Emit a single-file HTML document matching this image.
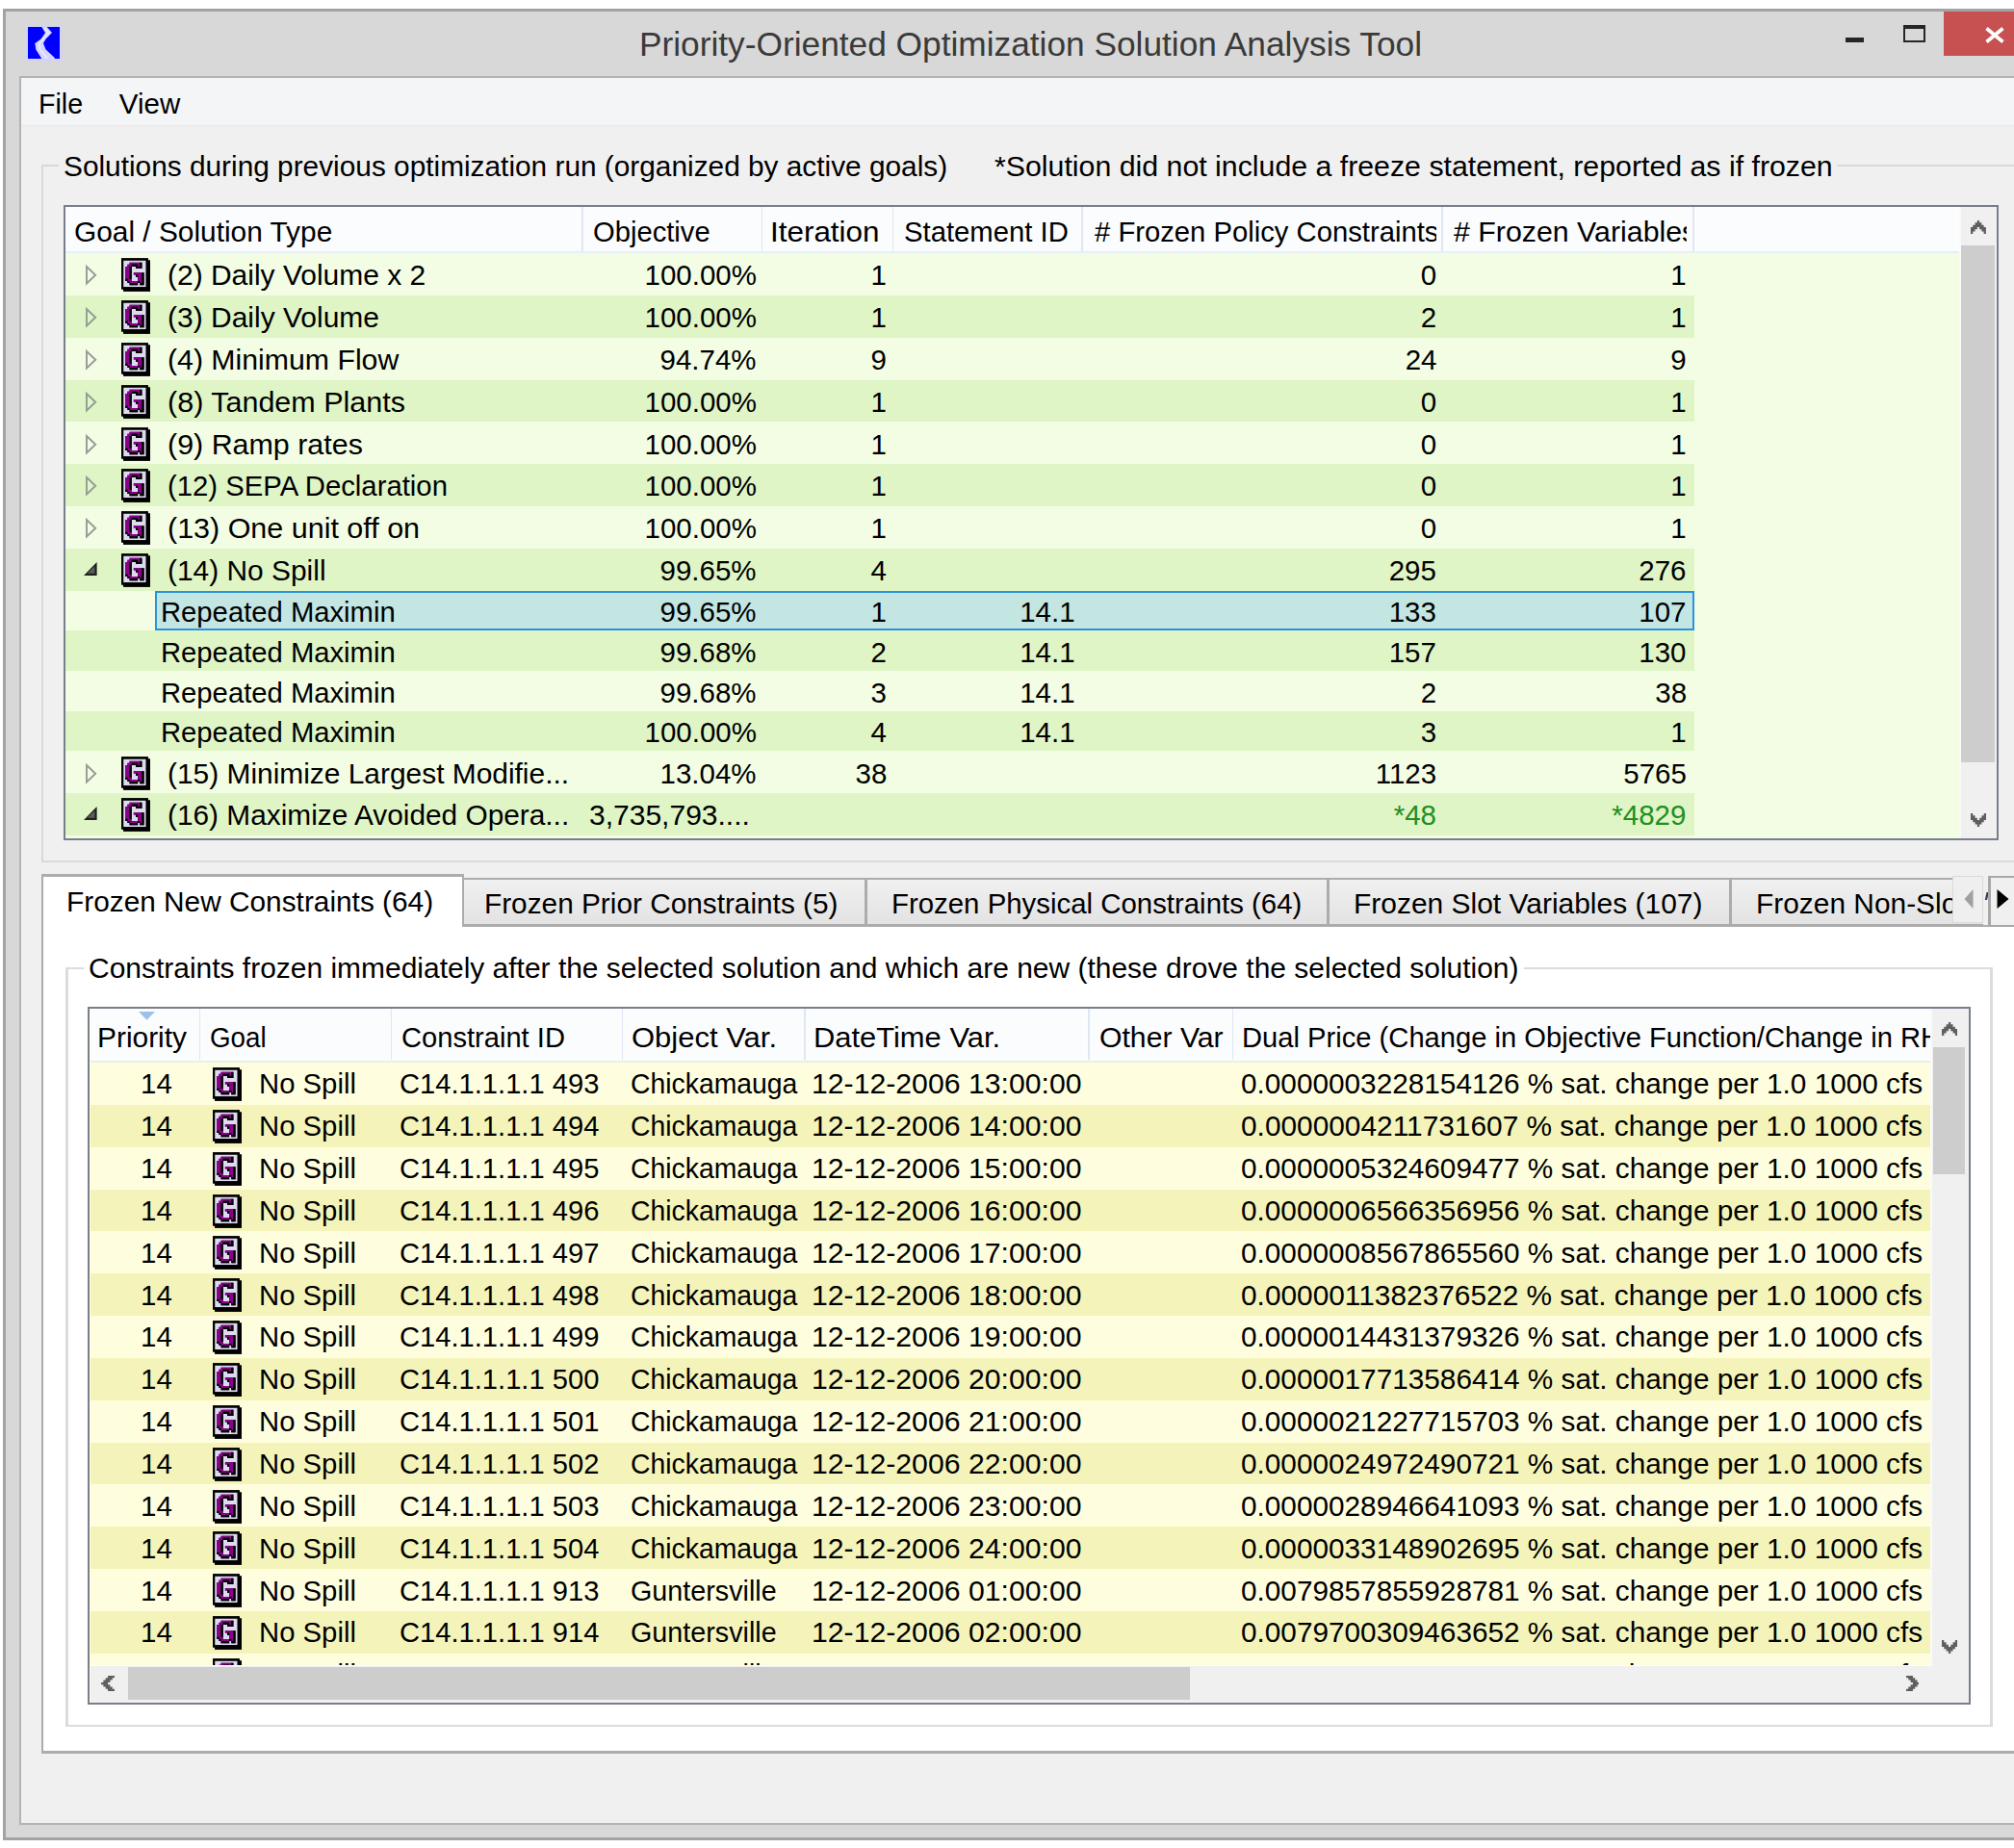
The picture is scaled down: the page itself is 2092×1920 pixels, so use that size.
<!DOCTYPE html>
<html><head><meta charset="utf-8"><title>Priority-Oriented Optimization Solution Analysis Tool</title>
<style>
html,body{margin:0;padding:0;}
body{width:2092px;height:1920px;position:relative;overflow:hidden;background:#ffffff;font-family:'Liberation Sans', sans-serif;}
.t{position:absolute;white-space:pre;font-family:'Liberation Sans', sans-serif;}
</style></head><body>
<svg width="0" height="0" style="position:absolute"><defs><symbol id="gi" viewBox="0 0 14 16"><rect x="0" y="0" width="13" height="15" fill="#000"/><rect x="1" y="1" width="13" height="15" fill="#000"/><path fill="#dedaf0" d="M1 1h11v1h-11zM1 2h3v1h-3zM10 2h2v1h-2zM1 3h2v1h-2zM10 3h2v1h-2zM1 4h1v1h-1zM5 4h2v1h-2zM10 4h2v1h-2zM1 5h1v1h-1zM5 5h7v1h-7zM1 6h1v1h-1zM5 6h7v1h-7zM1 7h1v1h-1zM5 7h1v1h-1zM11 7h1v1h-1zM1 8h1v1h-1zM5 8h2v1h-2zM11 8h1v1h-1zM1 9h1v1h-1zM5 9h3v1h-3zM11 9h1v1h-1zM1 10h1v1h-1zM5 10h3v1h-3zM11 10h1v1h-1zM1 11h2v1h-2zM11 11h1v1h-1zM1 12h3v1h-3zM8 12h1v1h-1zM11 12h1v1h-1zM1 13h11v1h-11z"/><path fill="#8b008b" d="M4 2h5v1h-5zM3 3h2v1h-2zM8 3h1v1h-1zM2 4h2v1h-2zM2 5h2v1h-2zM2 6h2v1h-2zM2 7h2v1h-2zM6 7h4v1h-4zM2 8h2v1h-2zM8 8h2v1h-2zM2 9h2v1h-2zM8 9h2v1h-2zM3 10h2v1h-2zM8 10h2v1h-2zM4 11h4v1h-4zM9 11h1v1h-1z"/><path fill="#000" d="M0 0h13v1h-13zM0 1h1v1h-1zM12 1h2v1h-2zM0 2h1v1h-1zM9 2h1v1h-1zM12 2h2v1h-2zM0 3h1v1h-1zM5 3h3v1h-3zM9 3h1v1h-1zM12 3h2v1h-2zM0 4h1v1h-1zM4 4h1v1h-1zM7 4h3v1h-3zM12 4h2v1h-2zM0 5h1v1h-1zM4 5h1v1h-1zM12 5h2v1h-2zM0 6h1v1h-1zM4 6h1v1h-1zM12 6h2v1h-2zM0 7h1v1h-1zM4 7h1v1h-1zM10 7h1v1h-1zM12 7h2v1h-2zM0 8h1v1h-1zM4 8h1v1h-1zM7 8h1v1h-1zM10 8h1v1h-1zM12 8h2v1h-2zM0 9h1v1h-1zM4 9h1v1h-1zM10 9h1v1h-1zM12 9h2v1h-2zM0 10h1v1h-1zM2 10h1v1h-1zM10 10h1v1h-1zM12 10h2v1h-2zM0 11h1v1h-1zM3 11h1v1h-1zM8 11h1v1h-1zM10 11h1v1h-1zM12 11h2v1h-2zM0 12h1v1h-1zM4 12h4v1h-4zM9 12h2v1h-2zM12 12h2v1h-2zM0 13h1v1h-1zM12 13h2v1h-2zM0 14h14v1h-14zM1 15h13v1h-13z"/></symbol></defs></svg>
<div style="position:absolute;left:3.00px;top:9.00px;width:2089.00px;height:1903.00px;background:#a3a3a3;"></div>
<div style="position:absolute;left:6.00px;top:12.00px;width:2086.00px;height:1897.00px;background:#d8d8d8;"></div>
<div style="position:absolute;left:27.00px;top:26.00px;width:36.50px;height:37.00px;background:#d2d2fa;"></div>
<div style="position:absolute;left:29.00px;top:28.00px;width:32.50px;height:33.00px;background:#0000ff;"></div>
<svg style="position:absolute;left:29px;top:28px" width="32.5" height="33" viewBox="0 0 32.5 33"><path d="M14.3,0 L19.7,0 L25,6 L18.6,12.6 L16,17 L18.6,23.4 L27.8,32 L27.8,33 L14.3,33 L8.3,23.4 L7.3,17 L13.7,12.6 L18,6 Z" fill="#d4d4ff"/><path d="M17,1 L21.5,6 L15.5,12.6 L11.5,17 L12.5,23.4 L20,33" fill="none" stroke="#e6e6ff" stroke-width="2.2"/></svg>
<div class="t" style="left:663.80px;top:27.90px;font-size:35.2px;line-height:35.2px;color:#3a3a3a;transform:scaleX(1.0025);transform-origin:left top;">Priority-Oriented Optimization Solution Analysis Tool</div>
<div style="position:absolute;left:1917.00px;top:39.00px;width:19.00px;height:5.00px;background:#262626;"></div>
<div style="position:absolute;box-sizing:border-box;left:1977.00px;top:25.60px;width:23.00px;height:18.40px;border:2px solid #262626;background:transparent;"></div>
<div style="position:absolute;left:1977.00px;top:25.60px;width:23.00px;height:4.00px;background:#262626;"></div>
<div style="position:absolute;left:2019.00px;top:12.00px;width:73.00px;height:46.00px;background:#c75050;"></div>
<svg style="position:absolute;left:2062px;top:27.5px" width="20" height="17" viewBox="0 0 20 17"><path d="M1.5,1.5 L18.5,15.5 M18.5,1.5 L1.5,15.5" stroke="#fff" stroke-width="3.6"/></svg>
<div style="position:absolute;left:20.00px;top:79.00px;width:2072.00px;height:1816.50px;background:#b3b3b3;"></div>
<div style="position:absolute;left:22.00px;top:81.00px;width:2070.00px;height:1812.50px;background:#f0f0f0;"></div>
<div style="position:absolute;left:22.00px;top:81.00px;width:2070.00px;height:49.00px;background:#f4f5f7;"></div>
<div style="position:absolute;left:22.00px;top:130.00px;width:2070.00px;height:1.00px;background:#e8e9eb;"></div>
<div class="t" style="left:40.36px;top:92.73px;font-size:29.5px;line-height:29.5px;color:#000;transform:scaleX(0.9711);transform-origin:left top;">File</div>
<div class="t" style="left:123.80px;top:92.73px;font-size:29.5px;line-height:29.5px;color:#000;">View</div>
<div style="position:absolute;left:43.00px;top:171.00px;width:2.00px;height:725.00px;background:#d9d9d9;"></div>
<div style="position:absolute;left:43.00px;top:171.00px;width:18.00px;height:2.00px;background:#d9d9d9;"></div>
<div style="position:absolute;left:1907.50px;top:171.00px;width:184.50px;height:2.00px;background:#d9d9d9;"></div>
<div style="position:absolute;left:43.00px;top:894.00px;width:2049.00px;height:2.00px;background:#d9d9d9;"></div>
<div class="t" style="left:65.69px;top:157.63px;font-size:29.5px;line-height:29.5px;color:#000;transform:scaleX(1.0107);transform-origin:left top;">Solutions during previous optimization run (organized by active goals)</div>
<div class="t" style="left:1032.60px;top:157.63px;font-size:29.5px;line-height:29.5px;color:#000;transform:scaleX(1.0270);transform-origin:left top;">*Solution did not include a freeze statement, reported as if frozen</div>
<div style="position:absolute;box-sizing:border-box;left:66.00px;top:213.00px;width:2010.40px;height:659.60px;border:2px solid #787e8b;background:#f3fde4;"></div>
<div style="position:absolute;left:68.00px;top:215.00px;width:1969.00px;height:46.00px;background:#fbfcfd;"></div>
<div style="position:absolute;left:68.00px;top:261.00px;width:1969.00px;height:2.00px;background:#e6eef8;"></div>
<div style="position:absolute;left:604.40px;top:215.00px;width:1.20px;height:46.00px;background:#dfe7f2;"></div>
<div style="position:absolute;left:791.20px;top:215.00px;width:1.20px;height:46.00px;background:#dfe7f2;"></div>
<div style="position:absolute;left:926.90px;top:215.00px;width:1.20px;height:46.00px;background:#dfe7f2;"></div>
<div style="position:absolute;left:1123.40px;top:215.00px;width:1.20px;height:46.00px;background:#dfe7f2;"></div>
<div style="position:absolute;left:1497.40px;top:215.00px;width:1.20px;height:46.00px;background:#dfe7f2;"></div>
<div style="position:absolute;left:1758.40px;top:215.00px;width:1.20px;height:46.00px;background:#dfe7f2;"></div>
<div class="t" style="left:76.59px;top:226.03px;font-size:29.5px;line-height:29.5px;color:#000;transform:scaleX(1.0117);transform-origin:left top;">Goal / Solution Type</div>
<div class="t" style="left:615.91px;top:226.03px;font-size:29.5px;line-height:29.5px;color:#000;transform:scaleX(0.9893);transform-origin:left top;">Objective</div>
<div class="t" style="left:800.47px;top:226.03px;font-size:29.5px;line-height:29.5px;color:#000;transform:scaleX(1.0650);transform-origin:left top;">Iteration</div>
<div class="t" style="left:939.11px;top:226.03px;font-size:29.5px;line-height:29.5px;color:#000;transform:scaleX(0.9924);transform-origin:left top;">Statement ID</div>
<div style="position:absolute;left:1124.60px;top:215.00px;width:367.40px;height:46.00px;overflow:hidden">
<div class="t" style="left:12.20px;top:11.03px;font-size:29.5px;line-height:29.5px;color:#000;transform:scaleX(0.9910);transform-origin:left top;"># Frozen Policy Constraints</div>
</div>
<div style="position:absolute;left:1498.60px;top:215.00px;width:253.40px;height:46.00px;overflow:hidden">
<div class="t" style="left:11.40px;top:11.03px;font-size:29.5px;line-height:29.5px;color:#000;transform:scaleX(1.0280);transform-origin:left top;"># Frozen Variables</div>
</div>
<div style="position:absolute;left:68.00px;top:263.00px;width:1969.00px;height:607.60px;overflow:hidden">
<svg style="position:absolute;left:20.00px;top:11.20px" width="16" height="24" viewBox="0 0 16 24"><polygon points="2,3 2,20.5 11.2,11.75" fill="none" stroke="#959b95" stroke-width="1.9"/></svg>
<svg style="position:absolute;left:58.00px;top:5.20px" width="30.0" height="35.0"><use href="#gi"/></svg>
<div class="t" style="left:105.78px;top:8.23px;font-size:29.5px;line-height:29.5px;color:#000;transform:scaleX(1.0163);transform-origin:left top;">(2) Daily Volume x 2</div>
<div class="t" style="left:601.50px;top:8.23px;font-size:29.5px;line-height:29.5px;color:#000;">100.00%</div>
<div class="t" style="left:836.50px;top:8.23px;font-size:29.5px;line-height:29.5px;color:#000;">1</div>
<div class="t" style="left:1407.70px;top:8.23px;font-size:29.5px;line-height:29.5px;color:#000;">0</div>
<div class="t" style="left:1667.30px;top:8.23px;font-size:29.5px;line-height:29.5px;color:#000;">1</div>
<div style="position:absolute;left:0.00px;top:43.85px;width:1692.00px;height:43.85px;background:#dff5c6;"></div>
<svg style="position:absolute;left:20.00px;top:55.05px" width="16" height="24" viewBox="0 0 16 24"><polygon points="2,3 2,20.5 11.2,11.75" fill="none" stroke="#959b95" stroke-width="1.9"/></svg>
<svg style="position:absolute;left:58.00px;top:49.05px" width="30.0" height="35.0"><use href="#gi"/></svg>
<div class="t" style="left:105.78px;top:52.08px;font-size:29.5px;line-height:29.5px;color:#000;transform:scaleX(1.0167);transform-origin:left top;">(3) Daily Volume</div>
<div class="t" style="left:601.50px;top:52.08px;font-size:29.5px;line-height:29.5px;color:#000;">100.00%</div>
<div class="t" style="left:836.50px;top:52.08px;font-size:29.5px;line-height:29.5px;color:#000;">1</div>
<div class="t" style="left:1407.70px;top:52.08px;font-size:29.5px;line-height:29.5px;color:#000;">2</div>
<div class="t" style="left:1667.30px;top:52.08px;font-size:29.5px;line-height:29.5px;color:#000;">1</div>
<svg style="position:absolute;left:20.00px;top:98.90px" width="16" height="24" viewBox="0 0 16 24"><polygon points="2,3 2,20.5 11.2,11.75" fill="none" stroke="#959b95" stroke-width="1.9"/></svg>
<svg style="position:absolute;left:58.00px;top:92.90px" width="30.0" height="35.0"><use href="#gi"/></svg>
<div class="t" style="left:105.77px;top:95.93px;font-size:29.5px;line-height:29.5px;color:#000;transform:scaleX(1.0252);transform-origin:left top;">(4) Minimum Flow</div>
<div class="t" style="left:617.50px;top:95.93px;font-size:29.5px;line-height:29.5px;color:#000;">94.74%</div>
<div class="t" style="left:836.50px;top:95.93px;font-size:29.5px;line-height:29.5px;color:#000;">9</div>
<div class="t" style="left:1391.70px;top:95.93px;font-size:29.5px;line-height:29.5px;color:#000;">24</div>
<div class="t" style="left:1667.30px;top:95.93px;font-size:29.5px;line-height:29.5px;color:#000;">9</div>
<div style="position:absolute;left:0.00px;top:131.55px;width:1692.00px;height:43.85px;background:#dff5c6;"></div>
<svg style="position:absolute;left:20.00px;top:142.75px" width="16" height="24" viewBox="0 0 16 24"><polygon points="2,3 2,20.5 11.2,11.75" fill="none" stroke="#959b95" stroke-width="1.9"/></svg>
<svg style="position:absolute;left:58.00px;top:136.75px" width="30.0" height="35.0"><use href="#gi"/></svg>
<div class="t" style="left:105.77px;top:139.78px;font-size:29.5px;line-height:29.5px;color:#000;transform:scaleX(1.0342);transform-origin:left top;">(8) Tandem Plants</div>
<div class="t" style="left:601.50px;top:139.78px;font-size:29.5px;line-height:29.5px;color:#000;">100.00%</div>
<div class="t" style="left:836.50px;top:139.78px;font-size:29.5px;line-height:29.5px;color:#000;">1</div>
<div class="t" style="left:1407.70px;top:139.78px;font-size:29.5px;line-height:29.5px;color:#000;">0</div>
<div class="t" style="left:1667.30px;top:139.78px;font-size:29.5px;line-height:29.5px;color:#000;">1</div>
<svg style="position:absolute;left:20.00px;top:186.60px" width="16" height="24" viewBox="0 0 16 24"><polygon points="2,3 2,20.5 11.2,11.75" fill="none" stroke="#959b95" stroke-width="1.9"/></svg>
<svg style="position:absolute;left:58.00px;top:180.60px" width="30.0" height="35.0"><use href="#gi"/></svg>
<div class="t" style="left:105.77px;top:183.63px;font-size:29.5px;line-height:29.5px;color:#000;transform:scaleX(1.0313);transform-origin:left top;">(9) Ramp rates</div>
<div class="t" style="left:601.50px;top:183.63px;font-size:29.5px;line-height:29.5px;color:#000;">100.00%</div>
<div class="t" style="left:836.50px;top:183.63px;font-size:29.5px;line-height:29.5px;color:#000;">1</div>
<div class="t" style="left:1407.70px;top:183.63px;font-size:29.5px;line-height:29.5px;color:#000;">0</div>
<div class="t" style="left:1667.30px;top:183.63px;font-size:29.5px;line-height:29.5px;color:#000;">1</div>
<div style="position:absolute;left:0.00px;top:219.25px;width:1692.00px;height:43.85px;background:#dff5c6;"></div>
<svg style="position:absolute;left:20.00px;top:230.45px" width="16" height="24" viewBox="0 0 16 24"><polygon points="2,3 2,20.5 11.2,11.75" fill="none" stroke="#959b95" stroke-width="1.9"/></svg>
<svg style="position:absolute;left:58.00px;top:224.45px" width="30.0" height="35.0"><use href="#gi"/></svg>
<div class="t" style="left:105.81px;top:227.48px;font-size:29.5px;line-height:29.5px;color:#000;transform:scaleX(0.9931);transform-origin:left top;">(12) SEPA Declaration</div>
<div class="t" style="left:601.50px;top:227.48px;font-size:29.5px;line-height:29.5px;color:#000;">100.00%</div>
<div class="t" style="left:836.50px;top:227.48px;font-size:29.5px;line-height:29.5px;color:#000;">1</div>
<div class="t" style="left:1407.70px;top:227.48px;font-size:29.5px;line-height:29.5px;color:#000;">0</div>
<div class="t" style="left:1667.30px;top:227.48px;font-size:29.5px;line-height:29.5px;color:#000;">1</div>
<svg style="position:absolute;left:20.00px;top:274.30px" width="16" height="24" viewBox="0 0 16 24"><polygon points="2,3 2,20.5 11.2,11.75" fill="none" stroke="#959b95" stroke-width="1.9"/></svg>
<svg style="position:absolute;left:58.00px;top:268.30px" width="30.0" height="35.0"><use href="#gi"/></svg>
<div class="t" style="left:105.77px;top:271.33px;font-size:29.5px;line-height:29.5px;color:#000;transform:scaleX(1.0331);transform-origin:left top;">(13) One unit off on</div>
<div class="t" style="left:601.50px;top:271.33px;font-size:29.5px;line-height:29.5px;color:#000;">100.00%</div>
<div class="t" style="left:836.50px;top:271.33px;font-size:29.5px;line-height:29.5px;color:#000;">1</div>
<div class="t" style="left:1407.70px;top:271.33px;font-size:29.5px;line-height:29.5px;color:#000;">0</div>
<div class="t" style="left:1667.30px;top:271.33px;font-size:29.5px;line-height:29.5px;color:#000;">1</div>
<div style="position:absolute;left:0.00px;top:306.95px;width:1692.00px;height:43.85px;background:#dff5c6;"></div>
<svg style="position:absolute;left:19.10px;top:320.95px" width="13.6" height="14" viewBox="0 0 13.6 14"><polygon points="0,14 13.6,14 13.6,0" fill="#1e211e"/><polygon points="3.6,11.8 11.4,11.8 11.4,4.2" fill="#5c5c5c"/></svg>
<svg style="position:absolute;left:58.00px;top:312.15px" width="30.0" height="35.0"><use href="#gi"/></svg>
<div class="t" style="left:105.79px;top:315.18px;font-size:29.5px;line-height:29.5px;color:#000;transform:scaleX(1.0137);transform-origin:left top;">(14) No Spill</div>
<div class="t" style="left:617.50px;top:315.18px;font-size:29.5px;line-height:29.5px;color:#000;">99.65%</div>
<div class="t" style="left:836.50px;top:315.18px;font-size:29.5px;line-height:29.5px;color:#000;">4</div>
<div class="t" style="left:1374.70px;top:315.18px;font-size:29.5px;line-height:29.5px;color:#000;">295</div>
<div class="t" style="left:1634.30px;top:315.18px;font-size:29.5px;line-height:29.5px;color:#000;">276</div>
<div style="position:absolute;box-sizing:border-box;left:92.90px;top:351.20px;width:1599.10px;height:41.05px;border:2.3px solid #2894dc;background:#c3e6e3;"></div>
<div class="t" style="left:98.82px;top:358.23px;font-size:29.5px;line-height:29.5px;color:#000;transform:scaleX(0.9909);transform-origin:left top;">Repeated Maximin</div>
<div class="t" style="left:617.50px;top:358.23px;font-size:29.5px;line-height:29.5px;color:#000;">99.65%</div>
<div class="t" style="left:836.50px;top:358.23px;font-size:29.5px;line-height:29.5px;color:#000;">1</div>
<div class="t" style="left:991.20px;top:358.23px;font-size:29.5px;line-height:29.5px;color:#000;">14.1</div>
<div class="t" style="left:1374.70px;top:358.23px;font-size:29.5px;line-height:29.5px;color:#000;">133</div>
<div class="t" style="left:1634.30px;top:358.23px;font-size:29.5px;line-height:29.5px;color:#000;">107</div>
<div style="position:absolute;left:0.00px;top:392.45px;width:1692.00px;height:41.65px;background:#dff5c6;"></div>
<div class="t" style="left:98.82px;top:399.88px;font-size:29.5px;line-height:29.5px;color:#000;transform:scaleX(0.9909);transform-origin:left top;">Repeated Maximin</div>
<div class="t" style="left:617.50px;top:399.88px;font-size:29.5px;line-height:29.5px;color:#000;">99.68%</div>
<div class="t" style="left:836.50px;top:399.88px;font-size:29.5px;line-height:29.5px;color:#000;">2</div>
<div class="t" style="left:991.20px;top:399.88px;font-size:29.5px;line-height:29.5px;color:#000;">14.1</div>
<div class="t" style="left:1374.70px;top:399.88px;font-size:29.5px;line-height:29.5px;color:#000;">157</div>
<div class="t" style="left:1634.30px;top:399.88px;font-size:29.5px;line-height:29.5px;color:#000;">130</div>
<div class="t" style="left:98.82px;top:441.53px;font-size:29.5px;line-height:29.5px;color:#000;transform:scaleX(0.9909);transform-origin:left top;">Repeated Maximin</div>
<div class="t" style="left:617.50px;top:441.53px;font-size:29.5px;line-height:29.5px;color:#000;">99.68%</div>
<div class="t" style="left:836.50px;top:441.53px;font-size:29.5px;line-height:29.5px;color:#000;">3</div>
<div class="t" style="left:991.20px;top:441.53px;font-size:29.5px;line-height:29.5px;color:#000;">14.1</div>
<div class="t" style="left:1407.70px;top:441.53px;font-size:29.5px;line-height:29.5px;color:#000;">2</div>
<div class="t" style="left:1651.30px;top:441.53px;font-size:29.5px;line-height:29.5px;color:#000;">38</div>
<div style="position:absolute;left:0.00px;top:475.75px;width:1692.00px;height:41.65px;background:#dff5c6;"></div>
<div class="t" style="left:98.82px;top:483.18px;font-size:29.5px;line-height:29.5px;color:#000;transform:scaleX(0.9909);transform-origin:left top;">Repeated Maximin</div>
<div class="t" style="left:601.50px;top:483.18px;font-size:29.5px;line-height:29.5px;color:#000;">100.00%</div>
<div class="t" style="left:836.50px;top:483.18px;font-size:29.5px;line-height:29.5px;color:#000;">4</div>
<div class="t" style="left:991.20px;top:483.18px;font-size:29.5px;line-height:29.5px;color:#000;">14.1</div>
<div class="t" style="left:1407.70px;top:483.18px;font-size:29.5px;line-height:29.5px;color:#000;">3</div>
<div class="t" style="left:1667.30px;top:483.18px;font-size:29.5px;line-height:29.5px;color:#000;">1</div>
<svg style="position:absolute;left:20.00px;top:528.60px" width="16" height="24" viewBox="0 0 16 24"><polygon points="2,3 2,20.5 11.2,11.75" fill="none" stroke="#959b95" stroke-width="1.9"/></svg>
<svg style="position:absolute;left:58.00px;top:522.60px" width="30.0" height="35.0"><use href="#gi"/></svg>
<div class="t" style="left:105.79px;top:525.63px;font-size:29.5px;line-height:29.5px;color:#000;transform:scaleX(1.0135);transform-origin:left top;">(15) Minimize Largest Modifie...</div>
<div class="t" style="left:617.50px;top:525.63px;font-size:29.5px;line-height:29.5px;color:#000;">13.04%</div>
<div class="t" style="left:820.50px;top:525.63px;font-size:29.5px;line-height:29.5px;color:#000;">38</div>
<div class="t" style="left:1360.70px;top:525.63px;font-size:29.5px;line-height:29.5px;color:#000;">1123</div>
<div class="t" style="left:1618.30px;top:525.63px;font-size:29.5px;line-height:29.5px;color:#000;">5765</div>
<div style="position:absolute;left:0.00px;top:561.25px;width:1692.00px;height:43.85px;background:#dff5c6;"></div>
<svg style="position:absolute;left:19.10px;top:575.25px" width="13.6" height="14" viewBox="0 0 13.6 14"><polygon points="0,14 13.6,14 13.6,0" fill="#1e211e"/><polygon points="3.6,11.8 11.4,11.8 11.4,4.2" fill="#5c5c5c"/></svg>
<svg style="position:absolute;left:58.00px;top:566.45px" width="30.0" height="35.0"><use href="#gi"/></svg>
<div class="t" style="left:105.79px;top:569.48px;font-size:29.5px;line-height:29.5px;color:#000;transform:scaleX(1.0110);transform-origin:left top;">(16) Maximize Avoided Opera...</div>
<div class="t" style="left:544.38px;top:569.48px;font-size:29.5px;line-height:29.5px;color:#000;transform:scaleX(1.0174);transform-origin:left top;">3,735,793....</div>
<div class="t" style="left:1379.70px;top:569.48px;font-size:29.5px;line-height:29.5px;color:#1f8f1f;">*48</div>
<div class="t" style="left:1606.30px;top:569.48px;font-size:29.5px;line-height:29.5px;color:#1f8f1f;">*4829</div>
</div>
<div style="position:absolute;left:2037.00px;top:215.00px;width:37.40px;height:655.60px;background:#f0f0f0;"></div>
<div style="position:absolute;left:2035.00px;top:215.00px;width:2.00px;height:655.60px;background:#fafafa;"></div>
<div style="position:absolute;left:2037.00px;top:254.50px;width:35.00px;height:537.00px;background:#cdcdcd;"></div>
<svg style="position:absolute;left:2046.70px;top:228.90px" width="15.90" height="13.90" viewBox="0 0 7 6" preserveAspectRatio="none"><g fill="#5f5f5f"><path d="M3 0h1v1h-1zM2 1h3v1h-3zM1 2h5v1h-5zM0 3h3v1h-3zM4 3h3v1h-3zM0 4h2v1h-2zM5 4h2v1h-2zM0 5h1v1h-1zM6 5h1v1h-1z"/></g></svg>
<svg style="position:absolute;left:2046.60px;top:844.90px" width="16.00" height="13.90" viewBox="0 0 7 6" preserveAspectRatio="none"><g fill="#5f5f5f"><path d="M0 0h1v1h-1zM6 0h1v1h-1zM0 1h2v1h-2zM5 1h2v1h-2zM0 2h3v1h-3zM4 2h3v1h-3zM1 3h5v1h-5zM2 4h3v1h-3zM3 5h1v1h-1z"/></g></svg>
<div style="position:absolute;left:43.00px;top:960.50px;width:2049.00px;height:861.20px;background:#acacac;"></div>
<div style="position:absolute;left:45.00px;top:962.70px;width:2047.00px;height:856.80px;background:#ffffff;"></div>
<div style="position:absolute;left:481.80px;top:912.30px;width:417.40px;height:50.20px;background:#acacac;"></div>
<div style="position:absolute;left:481.80px;top:914.40px;width:415.90px;height:46.10px;background:linear-gradient(#f0f0f0,#e3e3e3);"></div>
<div style="position:absolute;left:899.20px;top:912.30px;width:480.00px;height:50.20px;background:#acacac;"></div>
<div style="position:absolute;left:900.70px;top:914.40px;width:477.00px;height:46.10px;background:linear-gradient(#f0f0f0,#e3e3e3);"></div>
<div style="position:absolute;left:1379.20px;top:912.30px;width:418.60px;height:50.20px;background:#acacac;"></div>
<div style="position:absolute;left:1380.70px;top:914.40px;width:415.60px;height:46.10px;background:linear-gradient(#f0f0f0,#e3e3e3);"></div>
<div style="position:absolute;left:1797.80px;top:912.30px;width:342.20px;height:50.20px;background:#acacac;"></div>
<div style="position:absolute;left:1799.30px;top:914.40px;width:339.20px;height:46.10px;background:linear-gradient(#f0f0f0,#e3e3e3);"></div>
<div style="position:absolute;left:0.00px;top:900.00px;width:2028.00px;height:70.00px;overflow:hidden">
<div class="t" style="left:503.48px;top:24.03px;font-size:29.5px;line-height:29.5px;color:#000;transform:scaleX(1.0097);transform-origin:left top;">Frozen Prior Constraints (5)</div>
<div class="t" style="left:925.61px;top:24.03px;font-size:29.5px;line-height:29.5px;color:#000;transform:scaleX(0.9962);transform-origin:left top;">Frozen Physical Constraints (64)</div>
<div class="t" style="left:1406.37px;top:24.03px;font-size:29.5px;line-height:29.5px;color:#000;transform:scaleX(1.0155);transform-origin:left top;">Frozen Slot Variables (107)</div>
<div class="t" style="left:1823.57px;top:24.03px;font-size:29.5px;line-height:29.5px;color:#000;transform:scaleX(1.0130);transform-origin:left top;">Frozen Non-Slot Variables (0)</div>
</div>
<div style="position:absolute;left:43.00px;top:908.00px;width:438.80px;height:54.70px;background:#acacac;"></div>
<div style="position:absolute;left:45.00px;top:910.60px;width:434.50px;height:54.40px;background:#ffffff;"></div>
<div class="t" style="left:68.98px;top:921.73px;font-size:29.5px;line-height:29.5px;color:#000;transform:scaleX(1.0107);transform-origin:left top;">Frozen New Constraints (64)</div>
<div style="position:absolute;left:2028.00px;top:910.00px;width:32.00px;height:49.00px;background:#efefef;box-sizing:border-box;border:1.5px solid #dadada;"></div>
<svg style="position:absolute;left:2040px;top:923px" width="10" height="22" viewBox="0 0 10 22"><polygon points="9.5,1 9.5,21 0.5,11" fill="#a0a0a0"/></svg>
<div style="position:absolute;left:2060.00px;top:910.00px;width:5.40px;height:50.50px;background:#f0f0f0;"></div>
<svg style="position:absolute;left:2060.5px;top:926.5px" width="5" height="9" viewBox="0 0 5 9"><polygon points="2.5,0 5,0 3,8 0.8,8" fill="#3a3a5a"/></svg>
<div style="position:absolute;left:2065.40px;top:910.00px;width:26.60px;height:53.00px;background:#a8a8a8;"></div>
<div style="position:absolute;left:2067.50px;top:912.00px;width:24.50px;height:49.00px;background:#f0f0f0;"></div>
<svg style="position:absolute;left:2073.5px;top:923px" width="13" height="22" viewBox="0 0 13 22"><polygon points="0.5,1 0.5,21 12.5,11" fill="#000"/></svg>
<div style="position:absolute;left:68.00px;top:1005.00px;width:2.70px;height:789.00px;background:#dcdcdc;"></div>
<div style="position:absolute;left:2067.00px;top:1005.00px;width:2.70px;height:789.00px;background:#dcdcdc;"></div>
<div style="position:absolute;left:68.00px;top:1792.00px;width:2001.70px;height:2.00px;background:#dcdcdc;"></div>
<div style="position:absolute;left:68.00px;top:1005.00px;width:19.00px;height:2.00px;background:#dcdcdc;"></div>
<div style="position:absolute;left:1582.60px;top:1005.00px;width:487.10px;height:2.00px;background:#dcdcdc;"></div>
<div class="t" style="left:91.78px;top:990.93px;font-size:29.5px;line-height:29.5px;color:#000;transform:scaleX(1.0156);transform-origin:left top;">Constraints frozen immediately after the selected solution and which are new (these drove the selected solution)</div>
<div style="position:absolute;box-sizing:border-box;left:91.20px;top:1046.00px;width:1955.50px;height:724.60px;border:2.4px solid #787e8b;background:#fefede;"></div>
<div style="position:absolute;left:93.60px;top:1048.40px;width:1911.40px;height:53.10px;background:#fbfcfd;"></div>
<div style="position:absolute;left:93.60px;top:1101.50px;width:1911.40px;height:2.50px;background:#e6eef8;"></div>
<div style="position:absolute;left:207.20px;top:1048.40px;width:1.20px;height:53.10px;background:#dfe7f2;"></div>
<div style="position:absolute;left:406.00px;top:1048.40px;width:1.20px;height:53.10px;background:#dfe7f2;"></div>
<div style="position:absolute;left:645.60px;top:1048.40px;width:1.20px;height:53.10px;background:#dfe7f2;"></div>
<div style="position:absolute;left:835.40px;top:1048.40px;width:1.20px;height:53.10px;background:#dfe7f2;"></div>
<div style="position:absolute;left:1130.40px;top:1048.40px;width:1.20px;height:53.10px;background:#dfe7f2;"></div>
<div style="position:absolute;left:1280.20px;top:1048.40px;width:1.20px;height:53.10px;background:#dfe7f2;"></div>
<svg style="position:absolute;left:144px;top:1051px" width="17" height="9" viewBox="0 0 17 9"><polygon points="0,0 17,0 8.5,8.7" fill="#9cc3e6"/></svg>
<div class="t" style="left:101.37px;top:1062.73px;font-size:29.5px;line-height:29.5px;color:#000;transform:scaleX(1.0133);transform-origin:left top;">Priority</div>
<div class="t" style="left:218.16px;top:1062.73px;font-size:29.5px;line-height:29.5px;color:#000;transform:scaleX(0.9417);transform-origin:left top;">Goal</div>
<div class="t" style="left:416.71px;top:1062.73px;font-size:29.5px;line-height:29.5px;color:#000;transform:scaleX(0.9871);transform-origin:left top;">Constraint ID</div>
<div class="t" style="left:656.15px;top:1062.73px;font-size:29.5px;line-height:29.5px;color:#000;transform:scaleX(1.0504);transform-origin:left top;">Object Var.</div>
<div class="t" style="left:845.00px;top:1062.73px;font-size:29.5px;line-height:29.5px;color:#000;transform:scaleX(1.0475);transform-origin:left top;">DateTime Var.</div>
<div class="t" style="left:1141.88px;top:1062.73px;font-size:29.5px;line-height:29.5px;color:#000;transform:scaleX(1.0232);transform-origin:left top;">Other Var</div>
<div style="position:absolute;left:1281.40px;top:1048.40px;width:723.30px;height:53.10px;overflow:hidden">
<div class="t" style="left:9.02px;top:14.33px;font-size:29.5px;line-height:29.5px;color:#000;transform:scaleX(0.9885);transform-origin:left top;">Dual Price (Change in Objective Function/Change in RHS)</div>
</div>
<div style="position:absolute;left:93.60px;top:1104.00px;width:1911.40px;height:626.00px;overflow:hidden">
<div class="t" style="left:52.40px;top:7.33px;font-size:29.5px;line-height:29.5px;color:#000;">14</div>
<svg style="position:absolute;left:127.20px;top:5.00px" width="30.0" height="35.0"><use href="#gi"/></svg>
<div class="t" style="left:175.11px;top:7.33px;font-size:29.5px;line-height:29.5px;color:#000;transform:scaleX(0.9929);transform-origin:left top;">No Spill</div>
<div class="t" style="left:321.41px;top:7.33px;font-size:29.5px;line-height:29.5px;color:#000;transform:scaleX(0.9876);transform-origin:left top;">C14.1.1.1.1 493</div>
<div class="t" style="left:561.84px;top:7.33px;font-size:29.5px;line-height:29.5px;color:#000;transform:scaleX(0.9611);transform-origin:left top;">Chickamauga</div>
<div class="t" style="left:749.15px;top:7.33px;font-size:29.5px;line-height:29.5px;color:#000;transform:scaleX(1.0239);transform-origin:left top;">12-12-2006 13:00:00</div>
<div class="t" style="left:1195.79px;top:7.33px;font-size:29.5px;line-height:29.5px;color:#000;transform:scaleX(1.0087);transform-origin:left top;">0.0000003228154126 % sat. change per 1.0 1000 cfs</div>
<div style="position:absolute;left:0.00px;top:43.85px;width:1911.40px;height:43.85px;background:#f4f4ba;"></div>
<div class="t" style="left:52.40px;top:51.18px;font-size:29.5px;line-height:29.5px;color:#000;">14</div>
<svg style="position:absolute;left:127.20px;top:48.85px" width="30.0" height="35.0"><use href="#gi"/></svg>
<div class="t" style="left:175.11px;top:51.18px;font-size:29.5px;line-height:29.5px;color:#000;transform:scaleX(0.9929);transform-origin:left top;">No Spill</div>
<div class="t" style="left:321.41px;top:51.18px;font-size:29.5px;line-height:29.5px;color:#000;transform:scaleX(0.9876);transform-origin:left top;">C14.1.1.1.1 494</div>
<div class="t" style="left:561.84px;top:51.18px;font-size:29.5px;line-height:29.5px;color:#000;transform:scaleX(0.9611);transform-origin:left top;">Chickamauga</div>
<div class="t" style="left:749.15px;top:51.18px;font-size:29.5px;line-height:29.5px;color:#000;transform:scaleX(1.0239);transform-origin:left top;">12-12-2006 14:00:00</div>
<div class="t" style="left:1195.79px;top:51.18px;font-size:29.5px;line-height:29.5px;color:#000;transform:scaleX(1.0116);transform-origin:left top;">0.0000004211731607 % sat. change per 1.0 1000 cfs</div>
<div class="t" style="left:52.40px;top:95.03px;font-size:29.5px;line-height:29.5px;color:#000;">14</div>
<svg style="position:absolute;left:127.20px;top:92.70px" width="30.0" height="35.0"><use href="#gi"/></svg>
<div class="t" style="left:175.11px;top:95.03px;font-size:29.5px;line-height:29.5px;color:#000;transform:scaleX(0.9929);transform-origin:left top;">No Spill</div>
<div class="t" style="left:321.41px;top:95.03px;font-size:29.5px;line-height:29.5px;color:#000;transform:scaleX(0.9876);transform-origin:left top;">C14.1.1.1.1 495</div>
<div class="t" style="left:561.84px;top:95.03px;font-size:29.5px;line-height:29.5px;color:#000;transform:scaleX(0.9611);transform-origin:left top;">Chickamauga</div>
<div class="t" style="left:749.15px;top:95.03px;font-size:29.5px;line-height:29.5px;color:#000;transform:scaleX(1.0239);transform-origin:left top;">12-12-2006 15:00:00</div>
<div class="t" style="left:1195.79px;top:95.03px;font-size:29.5px;line-height:29.5px;color:#000;transform:scaleX(1.0087);transform-origin:left top;">0.0000005324609477 % sat. change per 1.0 1000 cfs</div>
<div style="position:absolute;left:0.00px;top:131.55px;width:1911.40px;height:43.85px;background:#f4f4ba;"></div>
<div class="t" style="left:52.40px;top:138.88px;font-size:29.5px;line-height:29.5px;color:#000;">14</div>
<svg style="position:absolute;left:127.20px;top:136.55px" width="30.0" height="35.0"><use href="#gi"/></svg>
<div class="t" style="left:175.11px;top:138.88px;font-size:29.5px;line-height:29.5px;color:#000;transform:scaleX(0.9929);transform-origin:left top;">No Spill</div>
<div class="t" style="left:321.41px;top:138.88px;font-size:29.5px;line-height:29.5px;color:#000;transform:scaleX(0.9876);transform-origin:left top;">C14.1.1.1.1 496</div>
<div class="t" style="left:561.84px;top:138.88px;font-size:29.5px;line-height:29.5px;color:#000;transform:scaleX(0.9611);transform-origin:left top;">Chickamauga</div>
<div class="t" style="left:749.15px;top:138.88px;font-size:29.5px;line-height:29.5px;color:#000;transform:scaleX(1.0239);transform-origin:left top;">12-12-2006 16:00:00</div>
<div class="t" style="left:1195.79px;top:138.88px;font-size:29.5px;line-height:29.5px;color:#000;transform:scaleX(1.0087);transform-origin:left top;">0.0000006566356956 % sat. change per 1.0 1000 cfs</div>
<div class="t" style="left:52.40px;top:182.73px;font-size:29.5px;line-height:29.5px;color:#000;">14</div>
<svg style="position:absolute;left:127.20px;top:180.40px" width="30.0" height="35.0"><use href="#gi"/></svg>
<div class="t" style="left:175.11px;top:182.73px;font-size:29.5px;line-height:29.5px;color:#000;transform:scaleX(0.9929);transform-origin:left top;">No Spill</div>
<div class="t" style="left:321.41px;top:182.73px;font-size:29.5px;line-height:29.5px;color:#000;transform:scaleX(0.9876);transform-origin:left top;">C14.1.1.1.1 497</div>
<div class="t" style="left:561.84px;top:182.73px;font-size:29.5px;line-height:29.5px;color:#000;transform:scaleX(0.9611);transform-origin:left top;">Chickamauga</div>
<div class="t" style="left:749.15px;top:182.73px;font-size:29.5px;line-height:29.5px;color:#000;transform:scaleX(1.0239);transform-origin:left top;">12-12-2006 17:00:00</div>
<div class="t" style="left:1195.79px;top:182.73px;font-size:29.5px;line-height:29.5px;color:#000;transform:scaleX(1.0087);transform-origin:left top;">0.0000008567865560 % sat. change per 1.0 1000 cfs</div>
<div style="position:absolute;left:0.00px;top:219.25px;width:1911.40px;height:43.85px;background:#f4f4ba;"></div>
<div class="t" style="left:52.40px;top:226.58px;font-size:29.5px;line-height:29.5px;color:#000;">14</div>
<svg style="position:absolute;left:127.20px;top:224.25px" width="30.0" height="35.0"><use href="#gi"/></svg>
<div class="t" style="left:175.11px;top:226.58px;font-size:29.5px;line-height:29.5px;color:#000;transform:scaleX(0.9929);transform-origin:left top;">No Spill</div>
<div class="t" style="left:321.41px;top:226.58px;font-size:29.5px;line-height:29.5px;color:#000;transform:scaleX(0.9876);transform-origin:left top;">C14.1.1.1.1 498</div>
<div class="t" style="left:561.84px;top:226.58px;font-size:29.5px;line-height:29.5px;color:#000;transform:scaleX(0.9611);transform-origin:left top;">Chickamauga</div>
<div class="t" style="left:749.15px;top:226.58px;font-size:29.5px;line-height:29.5px;color:#000;transform:scaleX(1.0239);transform-origin:left top;">12-12-2006 18:00:00</div>
<div class="t" style="left:1195.79px;top:226.58px;font-size:29.5px;line-height:29.5px;color:#000;transform:scaleX(1.0116);transform-origin:left top;">0.0000011382376522 % sat. change per 1.0 1000 cfs</div>
<div class="t" style="left:52.40px;top:270.43px;font-size:29.5px;line-height:29.5px;color:#000;">14</div>
<svg style="position:absolute;left:127.20px;top:268.10px" width="30.0" height="35.0"><use href="#gi"/></svg>
<div class="t" style="left:175.11px;top:270.43px;font-size:29.5px;line-height:29.5px;color:#000;transform:scaleX(0.9929);transform-origin:left top;">No Spill</div>
<div class="t" style="left:321.41px;top:270.43px;font-size:29.5px;line-height:29.5px;color:#000;transform:scaleX(0.9876);transform-origin:left top;">C14.1.1.1.1 499</div>
<div class="t" style="left:561.84px;top:270.43px;font-size:29.5px;line-height:29.5px;color:#000;transform:scaleX(0.9611);transform-origin:left top;">Chickamauga</div>
<div class="t" style="left:749.15px;top:270.43px;font-size:29.5px;line-height:29.5px;color:#000;transform:scaleX(1.0239);transform-origin:left top;">12-12-2006 19:00:00</div>
<div class="t" style="left:1195.79px;top:270.43px;font-size:29.5px;line-height:29.5px;color:#000;transform:scaleX(1.0087);transform-origin:left top;">0.0000014431379326 % sat. change per 1.0 1000 cfs</div>
<div style="position:absolute;left:0.00px;top:306.95px;width:1911.40px;height:43.85px;background:#f4f4ba;"></div>
<div class="t" style="left:52.40px;top:314.28px;font-size:29.5px;line-height:29.5px;color:#000;">14</div>
<svg style="position:absolute;left:127.20px;top:311.95px" width="30.0" height="35.0"><use href="#gi"/></svg>
<div class="t" style="left:175.11px;top:314.28px;font-size:29.5px;line-height:29.5px;color:#000;transform:scaleX(0.9929);transform-origin:left top;">No Spill</div>
<div class="t" style="left:321.41px;top:314.28px;font-size:29.5px;line-height:29.5px;color:#000;transform:scaleX(0.9876);transform-origin:left top;">C14.1.1.1.1 500</div>
<div class="t" style="left:561.84px;top:314.28px;font-size:29.5px;line-height:29.5px;color:#000;transform:scaleX(0.9611);transform-origin:left top;">Chickamauga</div>
<div class="t" style="left:749.15px;top:314.28px;font-size:29.5px;line-height:29.5px;color:#000;transform:scaleX(1.0239);transform-origin:left top;">12-12-2006 20:00:00</div>
<div class="t" style="left:1195.79px;top:314.28px;font-size:29.5px;line-height:29.5px;color:#000;transform:scaleX(1.0087);transform-origin:left top;">0.0000017713586414 % sat. change per 1.0 1000 cfs</div>
<div class="t" style="left:52.40px;top:358.13px;font-size:29.5px;line-height:29.5px;color:#000;">14</div>
<svg style="position:absolute;left:127.20px;top:355.80px" width="30.0" height="35.0"><use href="#gi"/></svg>
<div class="t" style="left:175.11px;top:358.13px;font-size:29.5px;line-height:29.5px;color:#000;transform:scaleX(0.9929);transform-origin:left top;">No Spill</div>
<div class="t" style="left:321.41px;top:358.13px;font-size:29.5px;line-height:29.5px;color:#000;transform:scaleX(0.9876);transform-origin:left top;">C14.1.1.1.1 501</div>
<div class="t" style="left:561.84px;top:358.13px;font-size:29.5px;line-height:29.5px;color:#000;transform:scaleX(0.9611);transform-origin:left top;">Chickamauga</div>
<div class="t" style="left:749.15px;top:358.13px;font-size:29.5px;line-height:29.5px;color:#000;transform:scaleX(1.0239);transform-origin:left top;">12-12-2006 21:00:00</div>
<div class="t" style="left:1195.79px;top:358.13px;font-size:29.5px;line-height:29.5px;color:#000;transform:scaleX(1.0087);transform-origin:left top;">0.0000021227715703 % sat. change per 1.0 1000 cfs</div>
<div style="position:absolute;left:0.00px;top:394.65px;width:1911.40px;height:43.85px;background:#f4f4ba;"></div>
<div class="t" style="left:52.40px;top:401.98px;font-size:29.5px;line-height:29.5px;color:#000;">14</div>
<svg style="position:absolute;left:127.20px;top:399.65px" width="30.0" height="35.0"><use href="#gi"/></svg>
<div class="t" style="left:175.11px;top:401.98px;font-size:29.5px;line-height:29.5px;color:#000;transform:scaleX(0.9929);transform-origin:left top;">No Spill</div>
<div class="t" style="left:321.41px;top:401.98px;font-size:29.5px;line-height:29.5px;color:#000;transform:scaleX(0.9876);transform-origin:left top;">C14.1.1.1.1 502</div>
<div class="t" style="left:561.84px;top:401.98px;font-size:29.5px;line-height:29.5px;color:#000;transform:scaleX(0.9611);transform-origin:left top;">Chickamauga</div>
<div class="t" style="left:749.15px;top:401.98px;font-size:29.5px;line-height:29.5px;color:#000;transform:scaleX(1.0239);transform-origin:left top;">12-12-2006 22:00:00</div>
<div class="t" style="left:1195.79px;top:401.98px;font-size:29.5px;line-height:29.5px;color:#000;transform:scaleX(1.0087);transform-origin:left top;">0.0000024972490721 % sat. change per 1.0 1000 cfs</div>
<div class="t" style="left:52.40px;top:445.83px;font-size:29.5px;line-height:29.5px;color:#000;">14</div>
<svg style="position:absolute;left:127.20px;top:443.50px" width="30.0" height="35.0"><use href="#gi"/></svg>
<div class="t" style="left:175.11px;top:445.83px;font-size:29.5px;line-height:29.5px;color:#000;transform:scaleX(0.9929);transform-origin:left top;">No Spill</div>
<div class="t" style="left:321.41px;top:445.83px;font-size:29.5px;line-height:29.5px;color:#000;transform:scaleX(0.9876);transform-origin:left top;">C14.1.1.1.1 503</div>
<div class="t" style="left:561.84px;top:445.83px;font-size:29.5px;line-height:29.5px;color:#000;transform:scaleX(0.9611);transform-origin:left top;">Chickamauga</div>
<div class="t" style="left:749.15px;top:445.83px;font-size:29.5px;line-height:29.5px;color:#000;transform:scaleX(1.0239);transform-origin:left top;">12-12-2006 23:00:00</div>
<div class="t" style="left:1195.79px;top:445.83px;font-size:29.5px;line-height:29.5px;color:#000;transform:scaleX(1.0087);transform-origin:left top;">0.0000028946641093 % sat. change per 1.0 1000 cfs</div>
<div style="position:absolute;left:0.00px;top:482.35px;width:1911.40px;height:43.85px;background:#f4f4ba;"></div>
<div class="t" style="left:52.40px;top:489.68px;font-size:29.5px;line-height:29.5px;color:#000;">14</div>
<svg style="position:absolute;left:127.20px;top:487.35px" width="30.0" height="35.0"><use href="#gi"/></svg>
<div class="t" style="left:175.11px;top:489.68px;font-size:29.5px;line-height:29.5px;color:#000;transform:scaleX(0.9929);transform-origin:left top;">No Spill</div>
<div class="t" style="left:321.41px;top:489.68px;font-size:29.5px;line-height:29.5px;color:#000;transform:scaleX(0.9876);transform-origin:left top;">C14.1.1.1.1 504</div>
<div class="t" style="left:561.84px;top:489.68px;font-size:29.5px;line-height:29.5px;color:#000;transform:scaleX(0.9611);transform-origin:left top;">Chickamauga</div>
<div class="t" style="left:749.15px;top:489.68px;font-size:29.5px;line-height:29.5px;color:#000;transform:scaleX(1.0239);transform-origin:left top;">12-12-2006 24:00:00</div>
<div class="t" style="left:1195.79px;top:489.68px;font-size:29.5px;line-height:29.5px;color:#000;transform:scaleX(1.0087);transform-origin:left top;">0.0000033148902695 % sat. change per 1.0 1000 cfs</div>
<div class="t" style="left:52.40px;top:533.53px;font-size:29.5px;line-height:29.5px;color:#000;">14</div>
<svg style="position:absolute;left:127.20px;top:531.20px" width="30.0" height="35.0"><use href="#gi"/></svg>
<div class="t" style="left:175.11px;top:533.53px;font-size:29.5px;line-height:29.5px;color:#000;transform:scaleX(0.9929);transform-origin:left top;">No Spill</div>
<div class="t" style="left:321.41px;top:533.53px;font-size:29.5px;line-height:29.5px;color:#000;transform:scaleX(0.9876);transform-origin:left top;">C14.1.1.1.1 913</div>
<div class="t" style="left:561.83px;top:533.53px;font-size:29.5px;line-height:29.5px;color:#000;transform:scaleX(0.9740);transform-origin:left top;">Guntersville</div>
<div class="t" style="left:749.15px;top:533.53px;font-size:29.5px;line-height:29.5px;color:#000;transform:scaleX(1.0239);transform-origin:left top;">12-12-2006 01:00:00</div>
<div class="t" style="left:1195.79px;top:533.53px;font-size:29.5px;line-height:29.5px;color:#000;transform:scaleX(1.0087);transform-origin:left top;">0.0079857855928781 % sat. change per 1.0 1000 cfs</div>
<div style="position:absolute;left:0.00px;top:570.05px;width:1911.40px;height:43.85px;background:#f4f4ba;"></div>
<div class="t" style="left:52.40px;top:577.38px;font-size:29.5px;line-height:29.5px;color:#000;">14</div>
<svg style="position:absolute;left:127.20px;top:575.05px" width="30.0" height="35.0"><use href="#gi"/></svg>
<div class="t" style="left:175.11px;top:577.38px;font-size:29.5px;line-height:29.5px;color:#000;transform:scaleX(0.9929);transform-origin:left top;">No Spill</div>
<div class="t" style="left:321.41px;top:577.38px;font-size:29.5px;line-height:29.5px;color:#000;transform:scaleX(0.9876);transform-origin:left top;">C14.1.1.1.1 914</div>
<div class="t" style="left:561.83px;top:577.38px;font-size:29.5px;line-height:29.5px;color:#000;transform:scaleX(0.9740);transform-origin:left top;">Guntersville</div>
<div class="t" style="left:749.15px;top:577.38px;font-size:29.5px;line-height:29.5px;color:#000;transform:scaleX(1.0239);transform-origin:left top;">12-12-2006 02:00:00</div>
<div class="t" style="left:1195.79px;top:577.38px;font-size:29.5px;line-height:29.5px;color:#000;transform:scaleX(1.0087);transform-origin:left top;">0.0079700309463652 % sat. change per 1.0 1000 cfs</div>
<div class="t" style="left:52.40px;top:621.23px;font-size:29.5px;line-height:29.5px;color:#000;">14</div>
<svg style="position:absolute;left:127.20px;top:618.90px" width="30.0" height="35.0"><use href="#gi"/></svg>
<div class="t" style="left:175.11px;top:621.23px;font-size:29.5px;line-height:29.5px;color:#000;transform:scaleX(0.9929);transform-origin:left top;">No Spill</div>
<div class="t" style="left:321.41px;top:621.23px;font-size:29.5px;line-height:29.5px;color:#000;transform:scaleX(0.9876);transform-origin:left top;">C14.1.1.1.1 915</div>
<div class="t" style="left:561.83px;top:621.23px;font-size:29.5px;line-height:29.5px;color:#000;transform:scaleX(0.9740);transform-origin:left top;">Guntersville</div>
<div class="t" style="left:749.15px;top:621.23px;font-size:29.5px;line-height:29.5px;color:#000;transform:scaleX(1.0239);transform-origin:left top;">12-12-2006 03:00:00</div>
<div class="t" style="left:1195.79px;top:621.23px;font-size:29.5px;line-height:29.5px;color:#000;transform:scaleX(1.0116);transform-origin:left top;">0.0079545390811224 % sat. change per 1.0 1000 cfs</div>
</div>
<div style="position:absolute;left:2005.00px;top:1048.40px;width:39.50px;height:720.20px;background:#f0f0f0;"></div>
<div style="position:absolute;left:2005.00px;top:1048.40px;width:2.20px;height:682.80px;background:#fafafa;"></div>
<div style="position:absolute;left:2008.00px;top:1088.00px;width:33.40px;height:131.60px;background:#cdcdcd;"></div>
<svg style="position:absolute;left:2016.60px;top:1061.90px" width="16.20" height="13.90" viewBox="0 0 7 6" preserveAspectRatio="none"><g fill="#5f5f5f"><path d="M3 0h1v1h-1zM2 1h3v1h-3zM1 2h5v1h-5zM0 3h3v1h-3zM4 3h3v1h-3zM0 4h2v1h-2zM5 4h2v1h-2zM0 5h1v1h-1zM6 5h1v1h-1z"/></g></svg>
<svg style="position:absolute;left:2016.60px;top:1703.90px" width="16.20" height="13.90" viewBox="0 0 7 6" preserveAspectRatio="none"><g fill="#5f5f5f"><path d="M0 0h1v1h-1zM6 0h1v1h-1zM0 1h2v1h-2zM5 1h2v1h-2zM0 2h3v1h-3zM4 2h3v1h-3zM1 3h5v1h-5zM2 4h3v1h-3zM3 5h1v1h-1z"/></g></svg>
<div style="position:absolute;left:93.60px;top:1730.00px;width:1911.40px;height:1.20px;background:#ffffff;"></div>
<div style="position:absolute;left:93.60px;top:1731.20px;width:1911.40px;height:37.40px;background:#f0f0f0;"></div>
<div style="position:absolute;left:133.00px;top:1732.20px;width:1103.00px;height:33.80px;background:#cdcdcd;"></div>
<svg style="position:absolute;left:104.90px;top:1740.90px" width="14.10" height="16.10" viewBox="0 0 6 7" preserveAspectRatio="none"><g fill="#5f5f5f"><path d="M3 0h3v1h-3zM2 1h3v1h-3zM1 2h3v1h-3zM0 3h3v1h-3zM1 4h3v1h-3zM2 5h3v1h-3zM3 6h3v1h-3z"/></g></svg>
<svg style="position:absolute;left:1979.50px;top:1740.90px" width="13.90" height="16.10" viewBox="0 0 6 7" preserveAspectRatio="none"><g fill="#5f5f5f"><path d="M0 0h3v1h-3zM1 1h3v1h-3zM2 2h3v1h-3zM3 3h3v1h-3zM2 4h3v1h-3zM1 5h3v1h-3zM0 6h3v1h-3z"/></g></svg>
</body></html>
